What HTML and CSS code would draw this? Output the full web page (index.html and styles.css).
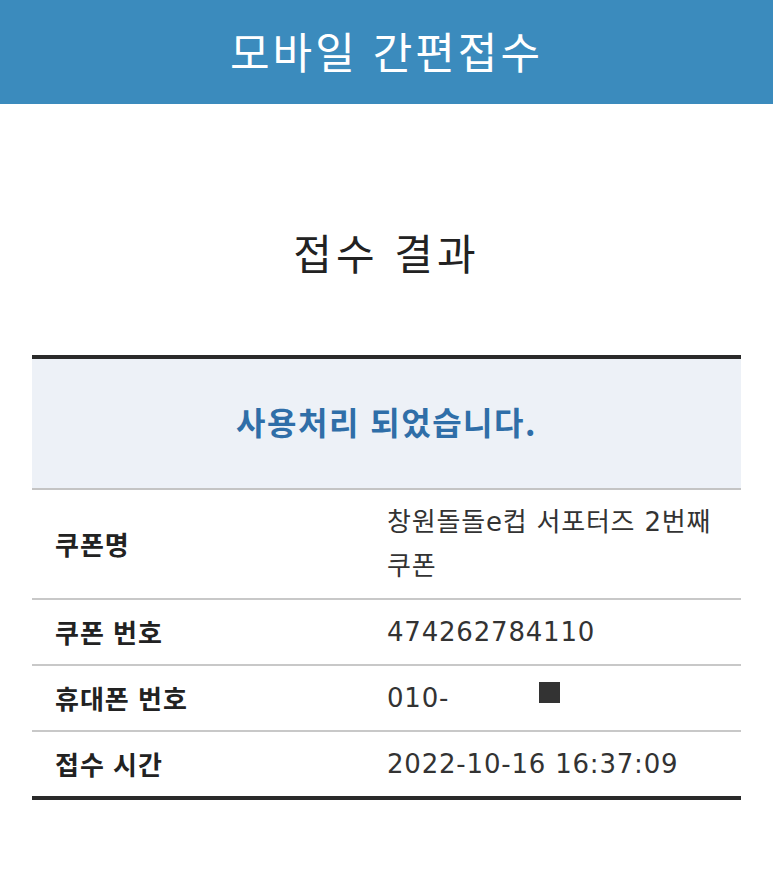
FILE: index.html
```html
<!DOCTYPE html>
<html lang="ko">
<head>
<meta charset="utf-8">
<link rel="stylesheet" href="styles.css">
</head>
<body>
<header class="top">
  <h1 class="top-title">모바일 간편접수</h1>
</header>
<main class="content">
  <h2 class="page-title">접수 결과</h2>
  <table class="result">
    <thead>
      <tr><th colspan="2" class="status">사용처리 되었습니다.</th></tr>
    </thead>
    <tbody>
      <tr><td class="label">쿠폰명</td><td class="value">창원돌돌e컵 서포터즈 2번째 쿠폰</td></tr>
      <tr><td class="label">쿠폰 번호</td><td class="value">474262784110</td></tr>
      <tr><td class="label">휴대폰 번호</td><td class="value">010-<span class="mask"></span></td></tr>
      <tr><td class="label">접수 시간</td><td class="value">2022-10-16 16:37:09</td></tr>
    </tbody>
  </table>
</main>
</body>
</html>
```
FILE: styles.css
```css
html, body {
  margin: 0;
  padding: 0;
  background: #ffffff;
  font-family: "Noto Sans CJK KR", "Noto Sans", sans-serif;
  color: #222222;
}
.top {
  height: 104px;
  background: #3b8bbd;
  display: flex;
  align-items: center;
  justify-content: center;
}
.top-title {
  margin: 0 0 4px 0;
  color: #ffffff;
  font-size: 43px;
  font-weight: 400;
  line-height: 1;
  letter-spacing: 3px;
}
.content {
  padding: 0 32px;
}
.page-title {
  margin: 0;
  padding-top: 120px;
  height: 251px;
  box-sizing: border-box;
  text-align: center;
  font-size: 42px;
  font-weight: 400;
  line-height: 56px;
  color: #222222;
  letter-spacing: 4px;
}
.result {
  width: 100%;
  border-collapse: collapse;
  border-top: 4px solid #2a2a2a;
  border-bottom: 4px solid #2a2a2a;
}
.status {
  height: 123px;
  background: #edf1f7;
  color: #2f6ea8;
  font-size: 32px;
  font-weight: 700;
  text-align: center;
  padding: 0 0 6px 0;
  letter-spacing: 1.5px;
  border-bottom: 2px solid #c4c4c4;
}
.result td {
  border-top: 2px solid #c8c8c8;
  padding: 10px 0;
  line-height: 44px;
  vertical-align: middle;
}
.result tbody tr:first-child td {
  border-top: none;
}
.label {
  width: 355px;
  padding-left: 23px !important;
  font-size: 26px;
  font-weight: 700;
  color: #222222;
  letter-spacing: 1px;
  box-sizing: border-box;
}
.value {
  font-family: "DejaVu Sans", "Noto Sans CJK KR", sans-serif;
  font-size: 26px;
  color: #333333;
  letter-spacing: 0.8px;
  word-break: keep-all;
}
.mask {
  display: inline-block;
  width: 21px;
  height: 21px;
  background: #333333;
  margin-left: 90px;
  vertical-align: 4px;
}
```
